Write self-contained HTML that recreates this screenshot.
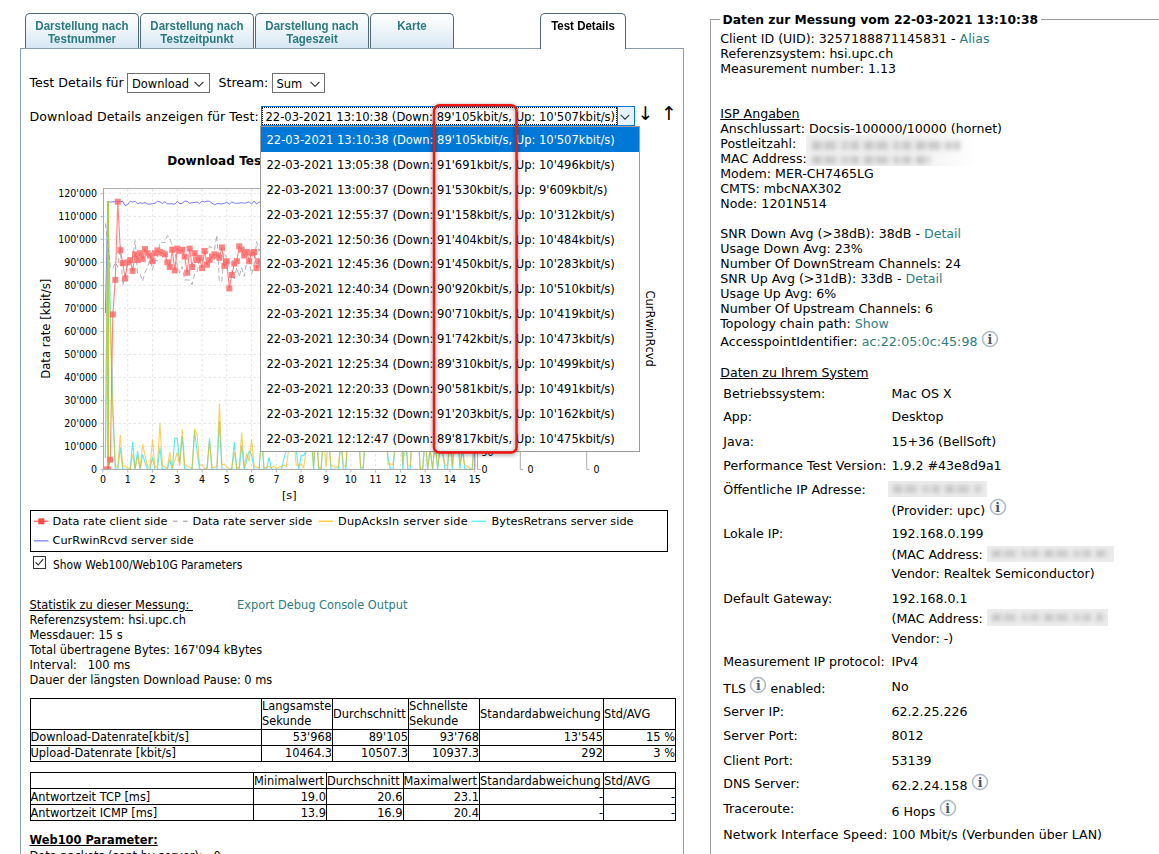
<!DOCTYPE html>
<html lang="de"><head><meta charset="utf-8"><title>Test Details</title>
<style>
html,body{margin:0;padding:0;background:#fff;}
body{width:1159px;height:854px;overflow:hidden;position:relative;font-family:"DejaVu Sans","Liberation Sans",sans-serif;font-size:12.6px;color:#000;}
a{color:#2f7d80;text-decoration:none;}
#tabs{position:absolute;left:0;top:0;}
.tab{position:absolute;top:13px;height:35px;box-sizing:border-box;border:1px solid #4d677b;border-bottom:none;border-radius:5px 5px 0 0;
 background:linear-gradient(#ffffff 0%,#f3f8fb 35%,#d6e7f2 100%);font:bold 12.5px/13.5px "Liberation Sans",sans-serif;color:#2c7a80;text-align:center;padding-top:5.5px;white-space:nowrap;}
.tab span{display:block;transform:scaleX(0.92);transform-origin:50% 50%;margin:0 -10px;}
.tab.active{background:#fff;color:#000;height:36px;z-index:3;}
#panel{position:absolute;left:20px;top:48px;width:664px;height:900px;box-sizing:border-box;border:1px solid #8a9daf;background:#fff;}
.abs{position:absolute;white-space:nowrap;}
.selbox{position:absolute;box-sizing:border-box;border:1px solid #6f6f6f;background:#fff;font:12.75px/17px "DejaVu Sans Condensed","Liberation Sans",sans-serif;white-space:nowrap;}
.selbox .tx{position:absolute;left:4px;top:0.5px;}
.chev{position:absolute;right:4.5px;top:6.5px;width:10px;height:6.5px;}
#dd{position:absolute;left:260px;top:126px;width:380px;height:326px;overflow:hidden;box-sizing:border-box;border:1px solid #9b9b9b;background:#fff;margin:0;padding:0;list-style:none;
 font:12.8px/25.9px "DejaVu Sans Condensed","Liberation Sans",sans-serif;z-index:10;}
#dd li{height:24.9px;padding-left:5.5px;white-space:nowrap;}
#dd li.sel{background:#0078d7;color:#fff;}
#redbox{position:absolute;left:425px;top:97px;z-index:20;filter:drop-shadow(0 1.2px 2px rgba(0,0,0,0.5));overflow:visible;}
#legend{position:absolute;left:30px;top:510px;width:638px;height:42px;box-sizing:border-box;border:1px solid #000;font:11.3px "DejaVu Sans",sans-serif;}
#legend span{position:absolute;white-space:nowrap;}
.stats{position:absolute;left:29.5px;font-size:11.4px;line-height:15px;white-space:nowrap;}
table.dt{position:absolute;left:29.5px;border-collapse:collapse;font-size:11.4px;line-height:15px;table-layout:fixed;width:645.5px;}
table.dt td{border:1px solid #000;padding:0;white-space:nowrap;overflow:hidden;}
table.dt td.r{text-align:right;}
table.t2 td{padding-top:2px;line-height:13px;}
#fs{position:absolute;left:709.8px;top:19px;width:600px;height:900px;box-sizing:border-box;border:1px solid #9d9d9d;}
#fslegend{position:absolute;left:720px;top:11px;background:#fff;padding:0 3px 0 2.5px;font:bold 12.3px/18px "DejaVu Sans",sans-serif;white-space:nowrap;}
.rt{position:absolute;left:720.25px;line-height:15px;white-space:nowrap;}
.u{text-decoration:underline;}
#sys .l,#sys .v{position:absolute;line-height:20px;white-space:nowrap;}
#sys .l{left:723.25px;}
#sys .v{left:891.5px;}
.iw{display:inline-block;position:relative;width:16.5px;height:0;vertical-align:baseline;}
.info{position:absolute;left:0.4px;top:-15.6px;width:14px;height:14px;border:1px solid #a6b0bc;box-shadow:inset 0 0 0 0.6px #cdd3da,0 0 0 0.4px #d5dae0;border-radius:50%;font:bold 12.5px/15.5px "DejaVu Serif","Liberation Serif",serif;text-align:center;color:#44546a;background:#fff;}
.bl{position:absolute;background:#ececec;overflow:hidden;}
.bl i{position:absolute;left:5px;right:5px;top:4.5px;bottom:4.5px;filter:blur(2.3px);background:repeating-linear-gradient(90deg,#c6c6c6 0,#c6c6c6 9px,#e6e6e6 9px,#e6e6e6 12px,#cbcbcb 12px,#cbcbcb 24px,#ececec 24px,#ececec 29px,#d0d0d0 29px,#d0d0d0 36px,#e4e4e4 36px,#e4e4e4 39px,#c9c9c9 39px,#c9c9c9 47px,#ececec 47px,#ececec 52px);}
</style></head><body>

<div id="tabs">
 <div class="tab" style="left:25px;width:114px;"><span>Darstellung nach</span><span>Testnummer</span></div>
 <div class="tab" style="left:140px;width:114px;"><span>Darstellung nach</span><span>Testzeitpunkt</span></div>
 <div class="tab" style="left:255px;width:114px;"><span>Darstellung nach</span><span>Tageszeit</span></div>
 <div class="tab" style="left:370px;width:84px;"><span>Karte</span></div>
 <div class="tab active" style="left:540px;width:86px;"><span>Test Details</span></div>
</div>
<div id="panel"></div>

<div class="abs" style="left:29.5px;top:75.4px;line-height:16px;">Test Details für</div>
<div class="selbox" style="left:127px;top:73px;width:82.5px;height:19.5px;"><span class="tx">Download</span>
 <svg class="chev" viewBox="0 0 9 6"><path d="M0.4 0.8 L4.5 4.9 L8.6 0.8" fill="none" stroke="#2b2b2b" stroke-width="1.05"/></svg></div>
<div class="abs" style="left:218.5px;top:75.4px;line-height:16px;">Stream:</div>
<div class="selbox" style="left:271.5px;top:73px;width:53.5px;height:19.5px;"><span class="tx">Sum</span>
 <svg class="chev" viewBox="0 0 9 6"><path d="M0.4 0.8 L4.5 4.9 L8.6 0.8" fill="none" stroke="#2b2b2b" stroke-width="1.05"/></svg></div>

<div class="abs" style="left:29.5px;top:109px;line-height:16px;letter-spacing:0.09px;">Download Details anzeigen für Test:</div>
<div class="selbox" style="left:261px;top:106px;width:373.5px;height:20px;border-color:#0078d7;">
 <span class="tx" style="left:0;top:0;right:17px;bottom:0;border:1px dotted #111;box-sizing:border-box;line-height:17.5px;padding-left:2.5px;font-size:12.85px;">22-03-2021 13:10:38 (Down: 89'105kbit/s, Up: 10'507kbit/s)</span>
 <span style="position:absolute;right:0;top:0;bottom:0;width:16px;background:#e5f1fb;border-left:1px solid #0078d7;"></span>
 <svg class="chev" style="right:3.5px" viewBox="0 0 9 6"><path d="M0.5 0.8 L4.5 4.8 L8.5 0.8" fill="none" stroke="#333" stroke-width="1"/></svg></div>
<div class="abs" style="left:637.5px;top:102px;font:19px/22px 'DejaVu Sans',sans-serif;">↓</div>
<div class="abs" style="left:661px;top:102px;font:19px/22px 'DejaVu Sans',sans-serif;">↑</div>

<svg id="chart" style="position:absolute;left:29px;top:130px;" width="654" height="378" viewBox="29 130 654 378" font-family="DejaVu Sans Condensed, DejaVu Sans, sans-serif" font-size="10.5">
 <text x="167.2" y="165" font-family="DejaVu Sans, sans-serif" font-weight="bold" font-size="12" letter-spacing="0.1">Download Test Details 22-03-2021 13:10:38</text>
 <clipPath id="cp"><rect x="103.5" y="188.6" width="371.4" height="280.8"/></clipPath>
 <g clip-path="url(#cp)"><g stroke="#d9d9d9" stroke-width="0.7" stroke-dasharray="2.5,2.5" fill="none"><line x1="102.9" y1="189" x2="102.9" y2="469.4"/><line x1="127.7" y1="189" x2="127.7" y2="469.4"/><line x1="152.5" y1="189" x2="152.5" y2="469.4"/><line x1="177.3" y1="189" x2="177.3" y2="469.4"/><line x1="202.1" y1="189" x2="202.1" y2="469.4"/><line x1="226.8" y1="189" x2="226.8" y2="469.4"/><line x1="251.6" y1="189" x2="251.6" y2="469.4"/><line x1="276.4" y1="189" x2="276.4" y2="469.4"/><line x1="301.2" y1="189" x2="301.2" y2="469.4"/><line x1="326.0" y1="189" x2="326.0" y2="469.4"/><line x1="350.8" y1="189" x2="350.8" y2="469.4"/><line x1="375.6" y1="189" x2="375.6" y2="469.4"/><line x1="400.4" y1="189" x2="400.4" y2="469.4"/><line x1="425.2" y1="189" x2="425.2" y2="469.4"/><line x1="450.0" y1="189" x2="450.0" y2="469.4"/><line x1="474.8" y1="189" x2="474.8" y2="469.4"/><line x1="103.5" y1="469.4" x2="475" y2="469.4"/><line x1="103.5" y1="446.4" x2="475" y2="446.4"/><line x1="103.5" y1="423.4" x2="475" y2="423.4"/><line x1="103.5" y1="400.4" x2="475" y2="400.4"/><line x1="103.5" y1="377.4" x2="475" y2="377.4"/><line x1="103.5" y1="354.4" x2="475" y2="354.4"/><line x1="103.5" y1="331.4" x2="475" y2="331.4"/><line x1="103.5" y1="308.4" x2="475" y2="308.4"/><line x1="103.5" y1="285.4" x2="475" y2="285.4"/><line x1="103.5" y1="262.4" x2="475" y2="262.4"/><line x1="103.5" y1="239.4" x2="475" y2="239.4"/><line x1="103.5" y1="216.4" x2="475" y2="216.4"/><line x1="103.5" y1="193.4" x2="475" y2="193.4"/></g>
<polyline points="105.4,313.0 107.9,201.4 110.3,202.2 112.8,201.8 115.3,201.6 117.8,201.2 120.3,201.8 122.7,201.2 125.2,205.7 127.7,204.3 130.2,201.2 132.6,202.1 135.1,201.3 137.6,203.8 140.1,202.7 142.6,203.4 145.0,202.5 147.5,204.0 150.0,204.2 152.5,203.5 155.0,203.3 157.4,201.3 159.9,201.7 162.4,203.7 164.9,201.6 167.4,203.8 169.8,203.8 172.3,203.8 174.8,204.2 177.3,201.4 179.7,203.5 182.2,203.5 184.7,201.0 187.2,201.4 189.7,203.3 192.1,202.7 194.6,202.5 197.1,202.0 199.6,203.6 202.1,201.2 204.5,202.0 207.0,201.1 209.5,201.3 212.0,203.2 214.5,204.7 216.9,203.7 219.4,203.7 221.9,204.0 224.4,203.2 226.8,202.3 229.3,204.2 231.8,202.0 234.3,203.1 236.8,203.2 239.2,203.2 241.7,202.7 244.2,203.2 246.7,202.7 249.2,201.9 251.6,204.0 254.1,201.1 256.6,204.1 259.1,201.8 261.6,203.1 264.0,204.2 266.5,201.7 269.0,203.0 271.5,202.3 274.0,204.2 276.4,204.1 278.9,203.6 281.4,201.1 283.9,205.2 286.3,201.8 288.8,201.2 291.3,201.2 293.8,203.1 296.3,203.1 298.7,202.5 301.2,201.7 303.7,203.9 306.2,203.4 308.7,201.6 311.1,201.4 313.6,204.1 316.1,201.2 318.6,203.9 321.1,203.1 323.5,202.2 326.0,201.3 328.5,204.7 331.0,201.2 333.4,202.5 335.9,203.2 338.4,203.2 340.9,203.6 343.4,204.0 345.8,203.7 348.3,202.0 350.8,202.6 353.3,203.7 355.8,204.1 358.2,201.0 360.7,202.5 363.2,202.9 365.7,203.4 368.2,202.3 370.6,201.5 373.1,204.4 375.6,202.9 378.1,204.0 380.5,201.3 383.0,204.1 385.5,202.6 388.0,201.5 390.5,203.8 392.9,201.9 395.4,202.8 397.9,202.2 400.4,201.7 402.9,203.9 405.3,202.8 407.8,203.7 410.3,201.5 412.8,203.3 415.3,202.8 417.7,202.6 420.2,201.5 422.7,201.1 425.2,202.7 427.6,202.6 430.1,201.9 432.6,202.7 435.1,203.3 437.6,202.9 440.0,205.3 442.5,203.0 445.0,201.0 447.5,201.1 450.0,202.2 452.4,202.6 454.9,203.1 457.4,203.9 459.9,203.3 462.4,203.3 464.8,201.4 467.3,203.0 469.8,201.7 472.3,336.0 474.8,469.4" fill="none" stroke="#6a6aff" stroke-width="1" opacity="0.9"/>
<polyline points="105.4,457.9 107.9,201.4 110.3,308.4 112.8,405.0 115.3,469.4 117.8,469.4 120.3,447.5 122.7,469.4 125.2,469.4 127.7,469.4 130.2,469.4 132.6,441.8 135.1,469.4 137.6,451.0 140.1,469.4 142.6,454.4 145.0,462.5 147.5,469.4 150.0,469.4 152.5,456.8 155.0,469.4 157.4,469.4 159.9,447.5 162.4,469.4 164.9,469.4 167.4,469.4 169.8,460.2 172.3,469.4 174.8,438.3 177.3,438.3 179.7,463.6 182.2,436.0 184.7,469.4 187.2,469.4 189.7,469.4 192.1,469.4 194.6,431.4 197.1,451.0 199.6,469.4 202.1,469.4 204.5,469.4 207.0,469.4 209.5,438.3 212.0,469.4 214.5,469.4 216.9,469.4 219.4,421.1 221.9,469.4 224.4,469.4 226.8,469.4 229.3,469.4 231.8,469.4 234.3,441.8 236.8,469.4 239.2,469.4 241.7,445.2 244.2,469.4 246.7,460.2 249.2,451.0 251.6,454.4 254.1,469.4 256.6,469.4 259.1,469.4 261.6,435.5 264.0,469.4 266.5,469.4 269.0,457.1 271.5,469.4 274.0,469.4 276.4,469.4 278.9,469.4 281.4,469.4 283.9,458.4 286.3,450.7 288.8,448.3 291.3,433.2 293.8,442.0 296.3,451.0 298.7,469.4 301.2,455.6 303.7,455.6 306.2,450.8 308.7,429.3 311.1,430.8 313.6,469.4 316.1,424.7 318.6,469.4 321.1,469.4 323.5,435.8 326.0,450.4 328.5,438.1 331.0,469.4 333.4,469.4 335.9,469.4 338.4,469.4 340.9,441.9 343.4,469.4 345.8,469.4 348.3,432.9 350.8,432.7 353.3,434.9 355.8,442.4 358.2,428.0 360.7,469.4 363.2,469.4 365.7,431.7 368.2,424.4 370.6,441.5 373.1,446.4 375.6,428.9 378.1,425.6 380.5,448.9 383.0,442.7 385.5,426.3 388.0,457.8 390.5,469.4 392.9,469.4 395.4,445.2 397.9,433.1 400.4,421.6 402.9,469.4 405.3,430.3 407.8,469.4 410.3,469.4 412.8,423.9 415.3,446.5 417.7,426.1 420.2,469.4 422.7,469.4 425.2,436.6 427.6,469.4 430.1,448.7 432.6,469.4 435.1,443.0 437.6,469.4 440.0,449.3 442.5,451.6 445.0,469.4 447.5,469.4 450.0,437.8 452.4,469.4 454.9,431.3 457.4,425.5 459.9,469.4 462.4,449.5 464.8,469.4 467.3,469.4 469.8,469.4 472.3,469.4 474.8,427.4" fill="none" stroke="#19e6f0" stroke-width="1.15" opacity="0.7"/>
<polyline points="105.4,457.9 107.9,201.4 110.3,331.4 112.8,414.2 115.3,465.9 117.8,467.1 120.3,434.9 122.7,466.6 125.2,465.9 127.7,468.0 130.2,468.7 132.6,454.4 135.1,468.5 137.6,455.6 140.1,468.7 142.6,444.1 145.0,455.6 147.5,466.4 150.0,467.3 152.5,439.5 155.0,467.3 157.4,465.9 159.9,423.4 162.4,465.9 164.9,467.1 167.4,468.2 169.8,452.1 172.3,467.8 174.8,460.2 177.3,452.1 179.7,465.9 182.2,429.1 184.7,464.8 187.2,465.9 189.7,467.1 192.1,468.2 194.6,429.1 197.1,434.9 199.6,465.5 202.1,464.8 204.5,468.5 207.0,468.7 209.5,441.8 212.0,467.3 214.5,467.1 216.9,465.9 219.4,403.8 221.9,464.8 224.4,464.3 226.8,467.3 229.3,468.5 231.8,468.7 234.3,452.1 236.8,468.2 239.2,467.6 241.7,432.6 244.2,467.1 246.7,453.3 249.2,461.3 251.6,439.5 254.1,465.9 256.6,467.1 259.1,468.2 261.6,434.3 264.0,468.4 266.5,467.4 269.0,466.3 271.5,467.9 274.0,466.1 276.4,468.4 278.9,467.2 281.4,466.3 283.9,465.1 286.3,466.5 288.8,449.0 291.3,431.9 293.8,440.1 296.3,465.3 298.7,465.3 301.2,463.8 303.7,467.6 306.2,449.7 308.7,425.2 311.1,423.3 313.6,468.5 316.1,418.4 318.6,467.1 321.1,468.6 323.5,433.2 326.0,467.1 328.5,436.5 331.0,465.9 333.4,466.1 335.9,467.5 338.4,466.1 340.9,437.8 343.4,465.5 345.8,466.4 348.3,426.5 350.8,426.3 353.3,432.9 355.8,439.4 358.2,428.6 360.7,467.1 363.2,467.5 365.7,430.6 368.2,423.8 370.6,440.4 373.1,446.3 375.6,422.1 378.1,423.4 380.5,449.0 383.0,441.0 385.5,422.8 388.0,464.3 390.5,464.0 392.9,464.5 395.4,443.3 397.9,433.2 400.4,419.6 402.9,464.2 405.3,428.6 407.8,466.1 410.3,465.6 412.8,422.6 415.3,445.8 417.7,422.2 420.2,468.7 422.7,468.5 425.2,434.6 427.6,468.7 430.1,449.8 432.6,468.3 435.1,442.4 437.6,466.9 440.0,448.4 442.5,451.0 445.0,464.7 447.5,465.6 450.0,434.3 452.4,466.4 454.9,430.9 457.4,418.7 459.9,464.7 462.4,447.6 464.8,464.7 467.3,465.9 469.8,468.7 472.3,468.5 474.8,424.0" fill="none" stroke="#f7b500" stroke-width="1.15" opacity="0.62"/>
<line x1="107.9" y1="201.4" x2="108.1" y2="469.4" stroke="#a4d13a" stroke-width="1.9" opacity="0.95"/>
<polyline points="105.4,223.3 107.9,244.0 110.3,267.0 112.8,269.3 115.3,262.4 117.8,267.0 120.3,246.3 122.7,285.4 125.2,276.2 127.7,260.5 130.2,262.8 132.6,259.5 135.1,240.5 137.6,273.9 140.1,273.9 142.6,281.1 145.0,272.5 147.5,267.1 150.0,259.8 152.5,269.7 155.0,260.8 157.4,260.9 159.9,242.5 162.4,242.4 164.9,242.8 167.4,235.5 169.8,237.5 172.3,246.8 174.8,251.4 177.3,265.3 179.7,272.9 182.2,266.6 184.7,280.0 187.2,279.9 189.7,280.2 192.1,284.6 194.6,274.1 197.1,271.9 199.6,259.9 202.1,262.2 204.5,255.1 207.0,253.6 209.5,246.4 212.0,247.8 214.5,250.0 216.9,235.0 219.4,281.9 221.9,280.8 224.4,248.4 226.8,260.8 229.3,267.2 231.8,270.5 234.3,278.9 236.8,267.4 239.2,276.7 241.7,267.8 244.2,276.3 246.7,262.0 249.2,260.8 251.6,274.1 254.1,265.2 256.6,241.7 259.1,251.3 261.6,237.7" fill="none" stroke="#9a9a9a" stroke-width="0.9" stroke-dasharray="5,3" opacity="0.85"/>
<polyline points="105.4,469.4 107.9,469.4 110.3,459.7 112.8,314.4 115.3,279.9 117.8,201.7 120.3,250.2 122.7,263.1 125.2,278.5 127.7,262.4 130.2,260.1 132.6,270.9 135.1,254.3 137.6,260.1 140.1,253.2 142.6,258.9 145.0,249.1 147.5,253.2 150.0,255.5 152.5,261.2 155.0,253.2 157.4,250.4 159.9,252.0 162.4,253.2 164.9,254.3 167.4,262.4 169.8,267.0 172.3,249.7 174.8,270.4 177.3,248.6 179.7,250.9 182.2,249.7 184.7,256.6 187.2,272.8 189.7,248.6 192.1,267.0 194.6,253.2 197.1,260.1 199.6,257.8 202.1,268.1 204.5,250.9 207.0,264.7 209.5,260.1 212.0,256.6 214.5,254.3 216.9,255.5 219.4,257.8 221.9,247.4 224.4,265.9 226.8,261.2 229.3,288.4 231.8,275.0 234.3,263.5 236.8,261.2 239.2,246.3 241.7,249.7 244.2,255.5 246.7,252.0 249.2,261.2 251.6,253.2 254.1,252.0 256.6,268.1 259.1,261.2 261.6,264.2 264.0,268.1 266.5,256.6 269.0,269.9 271.5,259.3 274.0,263.2 276.4,270.3 278.9,259.9 281.4,270.7 283.9,261.6 286.3,270.0 288.8,269.5 291.3,261.8 293.8,252.6 296.3,268.8 298.7,266.5 301.2,257.2 303.7,249.8 306.2,258.3 308.7,262.5 311.1,249.1 313.6,270.5 316.1,251.9 318.6,264.9 321.1,268.3 323.5,268.9 326.0,264.5 328.5,252.8 331.0,267.4 333.4,258.2 335.9,256.9 338.4,263.0 340.9,259.0 343.4,270.2 345.8,270.2 348.3,266.9 350.8,256.0 353.3,261.8 355.8,264.4 358.2,258.1 360.7,261.2 363.2,264.7 365.7,253.3 368.2,255.5 370.6,266.0 373.1,258.4 375.6,259.5 378.1,251.5 380.5,254.8 383.0,265.0 385.5,249.1 388.0,268.9 390.5,262.0 392.9,254.2 395.4,268.1 397.9,260.4 400.4,270.7 402.9,256.2 405.3,254.0 407.8,258.4 410.3,251.5 412.8,264.4 415.3,255.6 417.7,257.9 420.2,258.3 422.7,261.1 425.2,252.3 427.6,249.9 430.1,260.7 432.6,256.3 435.1,270.2 437.6,255.5 440.0,256.7 442.5,248.8 445.0,252.7 447.5,265.1 450.0,262.7 452.4,256.2 454.9,271.1 457.4,261.0 459.9,267.7 462.4,268.9 464.8,270.2 467.3,253.9 469.8,268.6 472.3,265.9 474.8,262.6" fill="none" stroke="#ff5a5a" stroke-width="1.1" opacity="0.75"/>
<g fill="#ff5a5a" opacity="0.75"><rect x="102.4" y="466.4" width="6" height="6"/><rect x="104.9" y="466.4" width="6" height="6"/><rect x="107.3" y="456.7" width="6" height="6"/><rect x="109.8" y="311.4" width="6" height="6"/><rect x="112.3" y="276.9" width="6" height="6"/><rect x="114.8" y="198.7" width="6" height="6"/><rect x="117.3" y="247.2" width="6" height="6"/><rect x="119.7" y="260.1" width="6" height="6"/><rect x="122.2" y="275.5" width="6" height="6"/><rect x="124.7" y="259.4" width="6" height="6"/><rect x="127.2" y="257.1" width="6" height="6"/><rect x="129.6" y="267.9" width="6" height="6"/><rect x="132.1" y="251.3" width="6" height="6"/><rect x="134.6" y="257.1" width="6" height="6"/><rect x="137.1" y="250.2" width="6" height="6"/><rect x="139.6" y="255.9" width="6" height="6"/><rect x="142.0" y="246.1" width="6" height="6"/><rect x="144.5" y="250.2" width="6" height="6"/><rect x="147.0" y="252.5" width="6" height="6"/><rect x="149.5" y="258.2" width="6" height="6"/><rect x="152.0" y="250.2" width="6" height="6"/><rect x="154.4" y="247.4" width="6" height="6"/><rect x="156.9" y="249.0" width="6" height="6"/><rect x="159.4" y="250.2" width="6" height="6"/><rect x="161.9" y="251.3" width="6" height="6"/><rect x="164.4" y="259.4" width="6" height="6"/><rect x="166.8" y="264.0" width="6" height="6"/><rect x="169.3" y="246.7" width="6" height="6"/><rect x="171.8" y="267.4" width="6" height="6"/><rect x="174.3" y="245.6" width="6" height="6"/><rect x="176.7" y="247.9" width="6" height="6"/><rect x="179.2" y="246.7" width="6" height="6"/><rect x="181.7" y="253.6" width="6" height="6"/><rect x="184.2" y="269.8" width="6" height="6"/><rect x="186.7" y="245.6" width="6" height="6"/><rect x="189.1" y="264.0" width="6" height="6"/><rect x="191.6" y="250.2" width="6" height="6"/><rect x="194.1" y="257.1" width="6" height="6"/><rect x="196.6" y="254.8" width="6" height="6"/><rect x="199.1" y="265.1" width="6" height="6"/><rect x="201.5" y="247.9" width="6" height="6"/><rect x="204.0" y="261.7" width="6" height="6"/><rect x="206.5" y="257.1" width="6" height="6"/><rect x="209.0" y="253.6" width="6" height="6"/><rect x="211.5" y="251.3" width="6" height="6"/><rect x="213.9" y="252.5" width="6" height="6"/><rect x="216.4" y="254.8" width="6" height="6"/><rect x="218.9" y="244.4" width="6" height="6"/><rect x="221.4" y="262.9" width="6" height="6"/><rect x="223.8" y="258.2" width="6" height="6"/><rect x="226.3" y="285.4" width="6" height="6"/><rect x="228.8" y="272.0" width="6" height="6"/><rect x="231.3" y="260.5" width="6" height="6"/><rect x="233.8" y="258.2" width="6" height="6"/><rect x="236.2" y="243.3" width="6" height="6"/><rect x="238.7" y="246.7" width="6" height="6"/><rect x="241.2" y="252.5" width="6" height="6"/><rect x="243.7" y="249.0" width="6" height="6"/><rect x="246.2" y="258.2" width="6" height="6"/><rect x="248.6" y="250.2" width="6" height="6"/><rect x="251.1" y="249.0" width="6" height="6"/><rect x="253.6" y="265.1" width="6" height="6"/><rect x="256.1" y="258.2" width="6" height="6"/><rect x="258.6" y="261.2" width="6" height="6"/><rect x="261.0" y="265.1" width="6" height="6"/><rect x="263.5" y="253.6" width="6" height="6"/><rect x="266.0" y="266.9" width="6" height="6"/><rect x="268.5" y="256.3" width="6" height="6"/><rect x="271.0" y="260.2" width="6" height="6"/><rect x="273.4" y="267.3" width="6" height="6"/><rect x="275.9" y="256.9" width="6" height="6"/><rect x="278.4" y="267.7" width="6" height="6"/><rect x="280.9" y="258.6" width="6" height="6"/><rect x="283.3" y="267.0" width="6" height="6"/><rect x="285.8" y="266.5" width="6" height="6"/><rect x="288.3" y="258.8" width="6" height="6"/><rect x="290.8" y="249.6" width="6" height="6"/><rect x="293.3" y="265.8" width="6" height="6"/><rect x="295.7" y="263.5" width="6" height="6"/><rect x="298.2" y="254.2" width="6" height="6"/><rect x="300.7" y="246.8" width="6" height="6"/><rect x="303.2" y="255.3" width="6" height="6"/><rect x="305.7" y="259.5" width="6" height="6"/><rect x="308.1" y="246.1" width="6" height="6"/><rect x="310.6" y="267.5" width="6" height="6"/><rect x="313.1" y="248.9" width="6" height="6"/><rect x="315.6" y="261.9" width="6" height="6"/><rect x="318.1" y="265.3" width="6" height="6"/><rect x="320.5" y="265.9" width="6" height="6"/><rect x="323.0" y="261.5" width="6" height="6"/><rect x="325.5" y="249.8" width="6" height="6"/><rect x="328.0" y="264.4" width="6" height="6"/><rect x="330.4" y="255.2" width="6" height="6"/><rect x="332.9" y="253.9" width="6" height="6"/><rect x="335.4" y="260.0" width="6" height="6"/><rect x="337.9" y="256.0" width="6" height="6"/><rect x="340.4" y="267.2" width="6" height="6"/><rect x="342.8" y="267.2" width="6" height="6"/><rect x="345.3" y="263.9" width="6" height="6"/><rect x="347.8" y="253.0" width="6" height="6"/><rect x="350.3" y="258.8" width="6" height="6"/><rect x="352.8" y="261.4" width="6" height="6"/><rect x="355.2" y="255.1" width="6" height="6"/><rect x="357.7" y="258.2" width="6" height="6"/><rect x="360.2" y="261.7" width="6" height="6"/><rect x="362.7" y="250.3" width="6" height="6"/><rect x="365.2" y="252.5" width="6" height="6"/><rect x="367.6" y="263.0" width="6" height="6"/><rect x="370.1" y="255.4" width="6" height="6"/><rect x="372.6" y="256.5" width="6" height="6"/><rect x="375.1" y="248.5" width="6" height="6"/><rect x="377.5" y="251.8" width="6" height="6"/><rect x="380.0" y="262.0" width="6" height="6"/><rect x="382.5" y="246.1" width="6" height="6"/><rect x="385.0" y="265.9" width="6" height="6"/><rect x="387.5" y="259.0" width="6" height="6"/><rect x="389.9" y="251.2" width="6" height="6"/><rect x="392.4" y="265.1" width="6" height="6"/><rect x="394.9" y="257.4" width="6" height="6"/><rect x="397.4" y="267.7" width="6" height="6"/><rect x="399.9" y="253.2" width="6" height="6"/><rect x="402.3" y="251.0" width="6" height="6"/><rect x="404.8" y="255.4" width="6" height="6"/><rect x="407.3" y="248.5" width="6" height="6"/><rect x="409.8" y="261.4" width="6" height="6"/><rect x="412.3" y="252.6" width="6" height="6"/><rect x="414.7" y="254.9" width="6" height="6"/><rect x="417.2" y="255.3" width="6" height="6"/><rect x="419.7" y="258.1" width="6" height="6"/><rect x="422.2" y="249.3" width="6" height="6"/><rect x="424.6" y="246.9" width="6" height="6"/><rect x="427.1" y="257.7" width="6" height="6"/><rect x="429.6" y="253.3" width="6" height="6"/><rect x="432.1" y="267.2" width="6" height="6"/><rect x="434.6" y="252.5" width="6" height="6"/><rect x="437.0" y="253.7" width="6" height="6"/><rect x="439.5" y="245.8" width="6" height="6"/><rect x="442.0" y="249.7" width="6" height="6"/><rect x="444.5" y="262.1" width="6" height="6"/><rect x="447.0" y="259.7" width="6" height="6"/><rect x="449.4" y="253.2" width="6" height="6"/><rect x="451.9" y="268.1" width="6" height="6"/><rect x="454.4" y="258.0" width="6" height="6"/><rect x="456.9" y="264.7" width="6" height="6"/><rect x="459.4" y="265.9" width="6" height="6"/><rect x="461.8" y="267.2" width="6" height="6"/><rect x="464.3" y="250.9" width="6" height="6"/><rect x="466.8" y="265.6" width="6" height="6"/><rect x="469.3" y="262.9" width="6" height="6"/><rect x="471.8" y="259.6" width="6" height="6"/></g></g>
 <rect x="103.5" y="188.6" width="371.4" height="280.8" fill="none" stroke="#a8a8a8" stroke-width="1"/>
 <g fill="#000"><line x1="100.5" y1="469.4" x2="103" y2="469.4" stroke="#a5a5a5" stroke-width="0.8"/><text x="97" y="473.2" text-anchor="end">0</text><line x1="100.5" y1="446.4" x2="103" y2="446.4" stroke="#a5a5a5" stroke-width="0.8"/><text x="97" y="450.2" text-anchor="end">10'000</text><line x1="100.5" y1="423.4" x2="103" y2="423.4" stroke="#a5a5a5" stroke-width="0.8"/><text x="97" y="427.2" text-anchor="end">20'000</text><line x1="100.5" y1="400.4" x2="103" y2="400.4" stroke="#a5a5a5" stroke-width="0.8"/><text x="97" y="404.2" text-anchor="end">30'000</text><line x1="100.5" y1="377.4" x2="103" y2="377.4" stroke="#a5a5a5" stroke-width="0.8"/><text x="97" y="381.2" text-anchor="end">40'000</text><line x1="100.5" y1="354.4" x2="103" y2="354.4" stroke="#a5a5a5" stroke-width="0.8"/><text x="97" y="358.2" text-anchor="end">50'000</text><line x1="100.5" y1="331.4" x2="103" y2="331.4" stroke="#a5a5a5" stroke-width="0.8"/><text x="97" y="335.2" text-anchor="end">60'000</text><line x1="100.5" y1="308.4" x2="103" y2="308.4" stroke="#a5a5a5" stroke-width="0.8"/><text x="97" y="312.2" text-anchor="end">70'000</text><line x1="100.5" y1="285.4" x2="103" y2="285.4" stroke="#a5a5a5" stroke-width="0.8"/><text x="97" y="289.2" text-anchor="end">80'000</text><line x1="100.5" y1="262.4" x2="103" y2="262.4" stroke="#a5a5a5" stroke-width="0.8"/><text x="97" y="266.2" text-anchor="end">90'000</text><line x1="100.5" y1="239.4" x2="103" y2="239.4" stroke="#a5a5a5" stroke-width="0.8"/><text x="97" y="243.2" text-anchor="end">100'000</text><line x1="100.5" y1="216.4" x2="103" y2="216.4" stroke="#a5a5a5" stroke-width="0.8"/><text x="97" y="220.2" text-anchor="end">110'000</text><line x1="100.5" y1="193.4" x2="103" y2="193.4" stroke="#a5a5a5" stroke-width="0.8"/><text x="97" y="197.2" text-anchor="end">120'000</text><line x1="102.9" y1="470" x2="102.9" y2="472.5" stroke="#a5a5a5" stroke-width="0.8"/><text x="102.9" y="483.2" text-anchor="middle">0</text><line x1="127.7" y1="470" x2="127.7" y2="472.5" stroke="#a5a5a5" stroke-width="0.8"/><text x="127.7" y="483.2" text-anchor="middle">1</text><line x1="152.5" y1="470" x2="152.5" y2="472.5" stroke="#a5a5a5" stroke-width="0.8"/><text x="152.5" y="483.2" text-anchor="middle">2</text><line x1="177.3" y1="470" x2="177.3" y2="472.5" stroke="#a5a5a5" stroke-width="0.8"/><text x="177.3" y="483.2" text-anchor="middle">3</text><line x1="202.1" y1="470" x2="202.1" y2="472.5" stroke="#a5a5a5" stroke-width="0.8"/><text x="202.1" y="483.2" text-anchor="middle">4</text><line x1="226.8" y1="470" x2="226.8" y2="472.5" stroke="#a5a5a5" stroke-width="0.8"/><text x="226.8" y="483.2" text-anchor="middle">5</text><line x1="251.6" y1="470" x2="251.6" y2="472.5" stroke="#a5a5a5" stroke-width="0.8"/><text x="251.6" y="483.2" text-anchor="middle">6</text><line x1="276.4" y1="470" x2="276.4" y2="472.5" stroke="#a5a5a5" stroke-width="0.8"/><text x="276.4" y="483.2" text-anchor="middle">7</text><line x1="301.2" y1="470" x2="301.2" y2="472.5" stroke="#a5a5a5" stroke-width="0.8"/><text x="301.2" y="483.2" text-anchor="middle">8</text><line x1="326.0" y1="470" x2="326.0" y2="472.5" stroke="#a5a5a5" stroke-width="0.8"/><text x="326.0" y="483.2" text-anchor="middle">9</text><line x1="350.8" y1="470" x2="350.8" y2="472.5" stroke="#a5a5a5" stroke-width="0.8"/><text x="350.8" y="483.2" text-anchor="middle">10</text><line x1="375.6" y1="470" x2="375.6" y2="472.5" stroke="#a5a5a5" stroke-width="0.8"/><text x="375.6" y="483.2" text-anchor="middle">11</text><line x1="400.4" y1="470" x2="400.4" y2="472.5" stroke="#a5a5a5" stroke-width="0.8"/><text x="400.4" y="483.2" text-anchor="middle">12</text><line x1="425.2" y1="470" x2="425.2" y2="472.5" stroke="#a5a5a5" stroke-width="0.8"/><text x="425.2" y="483.2" text-anchor="middle">13</text><line x1="450.0" y1="470" x2="450.0" y2="472.5" stroke="#a5a5a5" stroke-width="0.8"/><text x="450.0" y="483.2" text-anchor="middle">14</text><line x1="474.8" y1="470" x2="474.8" y2="472.5" stroke="#a5a5a5" stroke-width="0.8"/><text x="474.8" y="483.2" text-anchor="middle">15</text></g>
 <text x="289.2" y="499" text-anchor="middle" font-family="DejaVu Sans, sans-serif" font-size="11.25">[s]</text>
 <text transform="translate(50.3,328.7) rotate(-90)" text-anchor="middle" font-family="DejaVu Sans, sans-serif" font-size="11.7">Data rate [kbit/s]</text>
 <g stroke="#9a9a9a" stroke-width="0.8" fill="none"><path d="M477.5 189V469.4H480.5"/><path d="M520.3 189V469.4H523"/><path d="M586.7 189V469.4H589.5"/></g>
 <text x="481.5" y="473">0</text><text x="481.5" y="456">50</text><text x="527.5" y="473">0</text><text x="593.5" y="473">0</text>
 <text transform="translate(646,328.7) rotate(90)" text-anchor="middle" font-family="DejaVu Sans, sans-serif" font-size="11.5">CurRwinRcvd</text>
</svg>

<ul id="dd"><li class="sel">22-03-2021 13:10:38 (Down: 89'105kbit/s, Up: 10'507kbit/s)</li><li class="">22-03-2021 13:05:38 (Down: 91'691kbit/s, Up: 10'496kbit/s)</li><li class="">22-03-2021 13:00:37 (Down: 91'530kbit/s, Up: 9'609kbit/s)</li><li class="">22-03-2021 12:55:37 (Down: 91'158kbit/s, Up: 10'312kbit/s)</li><li class="">22-03-2021 12:50:36 (Down: 91'404kbit/s, Up: 10'484kbit/s)</li><li class="">22-03-2021 12:45:36 (Down: 91'450kbit/s, Up: 10'283kbit/s)</li><li class="">22-03-2021 12:40:34 (Down: 90'920kbit/s, Up: 10'510kbit/s)</li><li class="">22-03-2021 12:35:34 (Down: 90'710kbit/s, Up: 10'419kbit/s)</li><li class="">22-03-2021 12:30:34 (Down: 91'742kbit/s, Up: 10'473kbit/s)</li><li class="">22-03-2021 12:25:34 (Down: 89'310kbit/s, Up: 10'499kbit/s)</li><li class="">22-03-2021 12:20:33 (Down: 90'581kbit/s, Up: 10'491kbit/s)</li><li class="">22-03-2021 12:15:32 (Down: 91'203kbit/s, Up: 10'162kbit/s)</li><li class="">22-03-2021 12:12:47 (Down: 89'817kbit/s, Up: 10'475kbit/s)</li></ul>
<svg id="redbox" width="100" height="365" viewBox="425 97 100 365"><rect x="434" y="105.2" width="82.55" height="347.3" rx="5.5" ry="5.5" fill="none" stroke="#f3150f" stroke-width="2.4"/></svg>

<div id="legend">
 <svg style="position:absolute;left:0;top:0" width="636" height="40"><g transform="translate(-31,-511)">
  <line x1="34" y1="521.3" x2="48.5" y2="521.3" stroke="#ff7373" stroke-width="1.5"/><rect x="38.3" y="518.3" width="6" height="6" fill="#ff4a4a"/>
  <line x1="173" y1="521.3" x2="188" y2="521.3" stroke="#b8b8b8" stroke-width="1.5" stroke-dasharray="4.5,5.5"/>
  <line x1="318.5" y1="521.3" x2="333" y2="521.3" stroke="#ffd04a" stroke-width="1.6"/>
  <line x1="471.5" y1="521.3" x2="486" y2="521.3" stroke="#70f0ff" stroke-width="1.6"/>
  <line x1="34" y1="540.8" x2="48.5" y2="540.8" stroke="#9090ff" stroke-width="1.5"/>
 </g></svg>
 <span style="left:21.5px;top:3.75px;">Data rate client side</span>
 <span style="left:161.5px;top:3.75px;">Data rate server side</span>
 <span style="left:307px;top:3.75px;letter-spacing:0.19px;">DupAcksIn server side</span>
 <span style="left:460.5px;top:3.75px;letter-spacing:0.04px">BytesRetrans server side</span>
 <span style="left:21.5px;top:23px;">CurRwinRcvd server side</span>
</div>

<div class="abs" style="left:33px;top:556px;width:12.5px;height:12.5px;box-sizing:border-box;border:1px solid #333;background:#fff;">
 <svg width="11" height="11" viewBox="0 0 11 11" style="position:absolute;left:0;top:0"><path d="M1.6 5.3 L4.2 8 L9.3 2" fill="none" stroke="#222" stroke-width="1.1"/></svg></div>
<div class="abs" style="left:53px;top:557.75px;font:11.9px/14px 'DejaVu Sans Condensed','Liberation Sans',sans-serif;">Show Web100/Web10G Parameters</div>

<div class="stats" style="top:597.5px;"><span class="u">Statistik zu dieser Messung:&nbsp;</span></div>
<div class="stats" style="top:597.5px;left:237px;"><a>Export Debug Console Output</a></div>
<div class="stats" style="top:612.5px;">Referenzsystem: hsi.upc.ch<br>Messdauer: 15 s<br>Total übertragene Bytes: 167'094 kBytes<br>Interval:&nbsp;&nbsp; 100 ms<br>Dauer der längsten Download Pause: 0 ms</div>

<table class="dt" style="top:698px;">
 <colgroup><col style="width:231.5px"><col style="width:71px"><col style="width:76px"><col style="width:71px"><col style="width:124px"><col style="width:72px"></colgroup>
 <tr style="height:31px"><td></td><td>Langsamste<br>Sekunde</td><td>Durchschnitt</td><td>Schnellste<br>Sekunde</td><td>Standardabweichung</td><td>Std/AVG</td></tr>
 <tr style="height:16px"><td>Download-Datenrate[kbit/s]</td><td class="r">53'968</td><td class="r">89'105</td><td class="r">93'768</td><td class="r">13'545</td><td class="r">15 %</td></tr>
 <tr style="height:16px"><td>Upload-Datenrate [kbit/s]</td><td class="r">10464.3</td><td class="r">10507.3</td><td class="r">10937.3</td><td class="r">292</td><td class="r">3 %</td></tr>
</table>
<table class="dt t2" style="top:772px;">
 <colgroup><col style="width:223.5px"><col style="width:73px"><col style="width:76.5px"><col style="width:76.5px"><col style="width:124px"><col style="width:72px"></colgroup>
 <tr style="height:16px"><td></td><td>Minimalwert</td><td>Durchschnitt</td><td>Maximalwert</td><td>Standardabweichung</td><td>Std/AVG</td></tr>
 <tr style="height:16px"><td>Antwortzeit TCP [ms]</td><td class="r">19.0</td><td class="r">20.6</td><td class="r">23.1</td><td class="r">-</td><td class="r">-</td></tr>
 <tr style="height:16px"><td>Antwortzeit ICMP [ms]</td><td class="r">13.9</td><td class="r">16.9</td><td class="r">20.4</td><td class="r">-</td><td class="r">-</td></tr>
</table>
<div class="stats" style="top:833.25px;font-weight:bold;font-size:11.45px;"><span class="u">Web100 Parameter:</span></div>
<div class="stats" style="top:848.75px;">Data packets (sent by server):&nbsp;&nbsp; 0</div>

<div id="fs"></div>
<div id="fslegend">Daten zur Messung vom 22-03-2021 13:10:38</div>
<div class="rt" style="top:30.6px;">Client ID (UID): 3257188871145831 - <a>Alias</a><br>Referenzsystem: hsi.upc.ch<br>Measurement number: 1.13<br><br><br><span class="u">ISP Angaben</span><br>Anschlussart: Docsis-100000/10000 (hornet)<br>Postleitzahl:<br>MAC Address:<br>Modem: MER-CH7465LG<br>CMTS: mbcNAX302<br>Node: 1201N514<br><br>SNR Down Avg (&gt;38dB): 38dB - <a>Detail</a><br>Usage Down Avg: 23%<br>Number Of DownStream Channels: 24<br>SNR Up Avg (&gt;31dB): 33dB - <a>Detail</a><br>Usage Up Avg: 6%<br>Number Of Upstream Channels: 6<br>Topology chain path: <a>Show</a></div>
<div class="rt" style="top:333.75px;letter-spacing:0.06px;">AccesspointIdentifier: <a>ac:22:05:0c:45:98</a> <span class="iw"><span class="info" style="margin-top:1px">i</span></span></div>
<div class="rt" style="top:364.5px;"><span class="u">Daten zu Ihrem System</span></div>


<div class="bl" style="left:806px;top:135px;width:172px;height:31px;background:linear-gradient(90deg,#f0f0f0 0,#f0f0f0 60%,#fff 100%);">
 <i style="left:6px;top:6px;bottom:auto;height:9px;width:148px;right:auto;"></i><i style="left:6px;top:21px;bottom:auto;height:8px;width:118px;right:auto;"></i></div>
<div class="bl" style="left:887.5px;top:480.5px;width:99.5px;height:16.5px;"><i></i></div>
<div class="bl" style="left:986.5px;top:545.75px;width:127px;height:16px;"><i></i></div>
<div class="bl" style="left:987px;top:609px;width:121px;height:16.5px;"><i></i></div>
<div id="sys"><div class="row"><span class="l" style="top:383.50px">Betriebssystem:</span><span class="v" style="top:383.50px">Mac OS X</span></div>
<div class="row"><span class="l" style="top:407.25px">App:</span><span class="v" style="top:407.25px">Desktop</span></div>
<div class="row"><span class="l" style="top:431.50px">Java:</span><span class="v" style="top:431.50px">15+36 (BellSoft)</span></div>
<div class="row"><span class="l" style="top:455.50px">Performance Test Version:</span><span class="v" style="top:455.50px">1.9.2 #43e8d9a1</span></div>
<div class="row"><span class="l" style="top:479.75px">Öffentliche IP Adresse:</span><span class="v" style="top:479.75px">&nbsp;</span><span class="v" style="top:501.00px"><span style="letter-spacing:0.07px">(Provider: upc)</span> <span class="iw"><span class="info" style="margin-top:-0.5px">i</span></span></span></div>
<div class="row"><span class="l" style="top:524.25px">Lokale IP:</span><span class="v" style="top:524.25px">192.168.0.199</span><span class="v" style="top:544.75px">(MAC Address: </span><span class="v" style="top:564.00px">Vendor: Realtek Semiconductor)</span></div>
<div class="row"><span class="l" style="top:588.50px">Default Gateway:</span><span class="v" style="top:588.50px">192.168.0.1</span><span class="v" style="top:608.50px">(MAC Address: </span><span class="v" style="top:628.50px">Vendor: -)</span></div>
<div class="row"><span class="l" style="top:652.25px">Measurement IP protocol:</span><span class="v" style="top:652.25px">IPv4</span></div>
<div class="row"><span class="l" style="top:678.50px">TLS <span class="iw"><span class="info">i</span></span> enabled:</span><span class="v" style="top:677.25px">No</span></div>
<div class="row"><span class="l" style="top:702.25px">Server IP:</span><span class="v" style="top:702.25px">62.2.25.226</span></div>
<div class="row"><span class="l" style="top:726.00px">Server Port:</span><span class="v" style="top:726.00px">8012</span></div>
<div class="row"><span class="l" style="top:750.50px">Client Port:</span><span class="v" style="top:750.50px">53139</span></div>
<div class="row"><span class="l" style="top:774.25px">DNS Server:</span><span class="v" style="top:775.50px">62.2.24.158 <span class="iw"><span class="info">i</span></span></span></div>
<div class="row"><span class="l" style="top:799.25px">Traceroute:</span><span class="v" style="top:801.75px">6 Hops <span class="iw"><span class="info">i</span></span></span></div>
<div class="row"><span class="l" style="top:825.00px"><span style="letter-spacing:0.15px">Network Interface Speed:</span></span><span class="v" style="top:825.00px">100 Mbit/s (Verbunden über LAN)</span></div>
</div>
</body></html>
